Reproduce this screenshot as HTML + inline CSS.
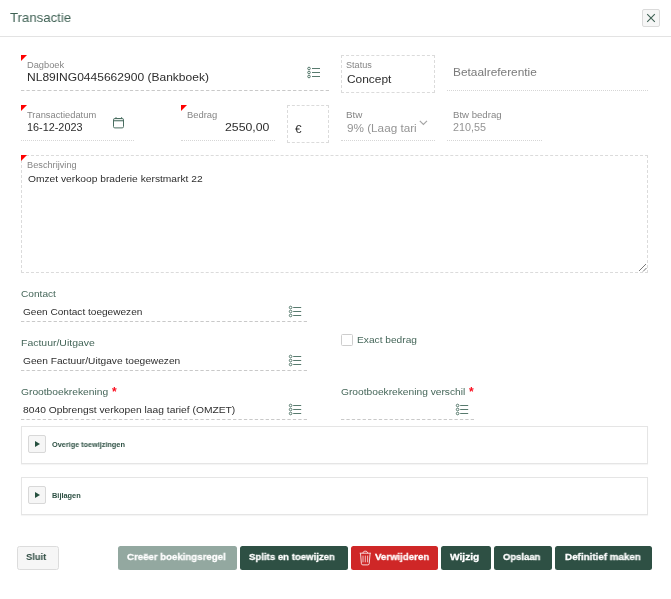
<!DOCTYPE html>
<html>
<head>
<meta charset="utf-8">
<title>Transactie</title>
<style>
html,body{margin:0;padding:0;background:#fff;}
body{width:671px;height:599px;position:relative;overflow:hidden;font-family:"Liberation Sans",sans-serif;color:#222;}
.a{position:absolute;}
.t{position:absolute;white-space:nowrap;line-height:1;transform-origin:0 0;will-change:transform;}
.hr{left:0;top:36px;width:671px;height:1px;background:#e3e3e3;}
.close{left:642px;top:9px;width:18px;height:18px;border:1px solid #dadada;border-radius:2px;background:#f6f6f6;box-sizing:border-box;}
.tri{width:0;height:0;border-top:6px solid #f00;border-right:6px solid transparent;}
.dash{height:1px;background:repeating-linear-gradient(90deg,#cdcdcd 0,#cdcdcd 3px,transparent 3px,transparent 5.4px);}
.dot{height:0;border-top:1px dotted #d6d6d6;}
.box{border:1px dashed #dbdbdb;box-sizing:border-box;}
.panel{border:1px solid #e5e5e5;box-sizing:border-box;background:#fff;box-shadow:0 1px 1px rgba(0,0,0,0.04);}
.tog{width:18px;height:18px;border:1px solid #d8d8d8;border-radius:2px;background:#f6f6f6;box-sizing:border-box;}
.tog:after{content:"";position:absolute;left:6px;top:4.5px;border-left:5px solid #26503f;border-top:3.2px solid transparent;border-bottom:3.2px solid transparent;}
.btn{top:546px;height:24px;border-radius:2.5px;box-sizing:border-box;}
.dk{background:#2e5044;}
</style>
</head>
<body>
<div class="a close"><svg width="16" height="16" viewBox="0 0 16 16" style="position:absolute;left:0;top:0"><path d="M4.2 4.2 L11.8 11.8 M11.8 4.2 L4.2 11.8" stroke="#3f6154" stroke-width="1.1" fill="none"/></svg></div>
<div class="a hr"></div>

<!-- row 1 -->
<div class="a tri" style="left:21px;top:55px"></div>
<svg class="a" style="left:306px;top:66px" width="15" height="13" viewBox="0 0 15 13"><g fill="none" stroke="#4f7366" stroke-width="0.95"><circle cx="3" cy="2.5" r="1.3"/><circle cx="3" cy="6.5" r="1.3"/><circle cx="3" cy="10.5" r="1.3"/><path d="M6 2.5H14M6 6.5H14M6 10.5H14"/></g></svg>
<svg class="a" style="left:21px;top:90px" width="308" height="1" viewBox="0 0 308 1"><path d="M0 0.5H308" stroke="#c9c9c9" stroke-width="1" stroke-dasharray="3.30 2.141" fill="none"/></svg>

<div class="a box" style="left:341px;top:55px;width:94px;height:38px"></div>
<div class="a dot" style="left:447px;top:90px;width:201px"></div>

<!-- row 2 -->
<div class="a tri" style="left:21px;top:105px"></div>
<svg class="a" style="left:112px;top:116px" width="13" height="13" viewBox="0 0 13 13"><g fill="none" stroke="#4a6e61" stroke-width="1"><rect x="1.5" y="2.5" width="10" height="9.4" rx="1.3"/><path d="M1.5 4.6H11.5" stroke-width="1.5" stroke-opacity="0.8"/><path d="M4 1.2V2.5M9.6 1.2V2.5"/></g></svg>
<div class="a dot" style="left:21px;top:140px;width:113px"></div>

<div class="a tri" style="left:181px;top:105px"></div>
<div class="a dot" style="left:181px;top:140px;width:94px"></div>
<div class="a box" style="left:287px;top:105px;width:42px;height:38px"></div>

<svg class="a" style="left:419px;top:120px" width="9" height="6" viewBox="0 0 9 6"><path d="M0.8 0.9L4.4 4.5L8 0.9" stroke="#a4a4a4" stroke-width="1.15" fill="none"/></svg>
<div class="a dot" style="left:341px;top:140px;width:94px"></div>
<div class="a dot" style="left:447px;top:140px;width:95px"></div>

<!-- Beschrijving -->
<div class="a box" style="left:21px;top:155px;width:627px;height:118px"></div>
<div class="a tri" style="left:21px;top:155px"></div>
<svg class="a" style="left:638px;top:263px" width="9" height="9" viewBox="0 0 9 9"><path d="M1 8L8 1M5 8.5L8.5 5" stroke="#6a6a6a" stroke-width="0.9" fill="none"/></svg>

<!-- list icons -->
<svg class="a" style="left:288px;top:305px" width="15" height="13" viewBox="0 0 15 13"><g fill="none" stroke="#4f7366" stroke-width="0.95"><circle cx="2.6" cy="2.5" r="1.3"/><circle cx="2.6" cy="6.5" r="1.3"/><circle cx="2.6" cy="10.5" r="1.3"/><path d="M5.2 2.5H13.2M5.2 6.5H13.2M5.2 10.5H13.2"/></g></svg>
<svg class="a" style="left:21px;top:321px" width="286" height="1" viewBox="0 0 286 1"><path d="M0 0.5H286" stroke="#c9c9c9" stroke-width="1" stroke-dasharray="3.30 2.137" fill="none"/></svg>
<svg class="a" style="left:288px;top:354px" width="15" height="13" viewBox="0 0 15 13"><g fill="none" stroke="#4f7366" stroke-width="0.95"><circle cx="2.6" cy="2.5" r="1.3"/><circle cx="2.6" cy="6.5" r="1.3"/><circle cx="2.6" cy="10.5" r="1.3"/><path d="M5.2 2.5H13.2M5.2 6.5H13.2M5.2 10.5H13.2"/></g></svg>
<svg class="a" style="left:21px;top:370px" width="286" height="1" viewBox="0 0 286 1"><path d="M0 0.5H286" stroke="#c9c9c9" stroke-width="1" stroke-dasharray="3.30 2.137" fill="none"/></svg>
<svg class="a" style="left:288px;top:403px" width="15" height="13" viewBox="0 0 15 13"><g fill="none" stroke="#4f7366" stroke-width="0.95"><circle cx="2.6" cy="2.5" r="1.3"/><circle cx="2.6" cy="6.5" r="1.3"/><circle cx="2.6" cy="10.5" r="1.3"/><path d="M5.2 2.5H13.2M5.2 6.5H13.2M5.2 10.5H13.2"/></g></svg>
<svg class="a" style="left:21px;top:419px" width="286" height="1" viewBox="0 0 286 1"><path d="M0 0.5H286" stroke="#c9c9c9" stroke-width="1" stroke-dasharray="3.30 2.137" fill="none"/></svg>
<svg class="a" style="left:455px;top:403px" width="15" height="13" viewBox="0 0 15 13"><g fill="none" stroke="#4f7366" stroke-width="0.95"><circle cx="2.6" cy="2.5" r="1.3"/><circle cx="2.6" cy="6.5" r="1.3"/><circle cx="2.6" cy="10.5" r="1.3"/><path d="M5.2 2.5H13.2M5.2 6.5H13.2M5.2 10.5H13.2"/></g></svg>
<svg class="a" style="left:341px;top:419px" width="133" height="1" viewBox="0 0 133 1"><path d="M0 0.5H133" stroke="#c9c9c9" stroke-width="1" stroke-dasharray="3.30 2.104" fill="none"/></svg>

<div class="a" style="left:341px;top:334px;width:12px;height:12px;border:1px solid #cdcdcd;border-radius:1.5px;box-sizing:border-box;background:#fff"></div>

<div class="t" style="left:112px;top:386px;font-size:12px;color:#fb0d1e;font-weight:bold">*</div>
<div class="t" style="left:469px;top:386px;font-size:12px;color:#fb0d1e;font-weight:bold">*</div>

<!-- panels -->
<div class="a panel" style="left:21px;top:426px;width:627px;height:38px"></div>
<div class="a tog" style="left:28px;top:435px"></div>
<div class="a panel" style="left:21px;top:477px;width:627px;height:38px"></div>
<div class="a tog" style="left:28px;top:486px"></div>

<!-- buttons -->
<div class="a btn" style="left:17px;width:42px;background:#f6f6f6;border:1px solid #dcdcdc"></div>
<div class="a btn" style="left:118px;width:119px;background:#93a8a0"></div>
<div class="a btn dk" style="left:240px;width:108px"></div>
<div class="a btn" style="left:351px;width:87px;background:#cf2727"></div>
<svg class="a" style="left:359px;top:550px" width="13" height="16" viewBox="0 0 13 16"><g fill="none" stroke="#fff" stroke-width="0.9" stroke-opacity="0.92"><path d="M0.7 3.2H11.9"/><path d="M4 3.2C4 1.7 5 1.2 6.3 1.2C7.6 1.2 8.6 1.7 8.6 3.2"/><path d="M1.5 3.4L2.4 13.6Q2.5 14.9 3.8 14.9H8.8Q10.1 14.9 10.2 13.6L11.1 3.4"/><path d="M4 5.6V12.3M6.3 5.6V12.3M8.6 5.6V12.3" stroke-opacity="0.8"/></g></svg>
<div class="a btn dk" style="left:441px;width:50px"></div>
<div class="a btn dk" style="left:494px;width:58px"></div>
<div class="a btn dk" style="left:555px;width:97px"></div>

<!-- text -->
<div class="t" style="left:10.00px;top:11.00px;font-size:13.6px;color:#3f6154;transform:scaleX(0.9702);">Transactie</div>
<div class="t" style="left:27.00px;top:61.00px;font-size:8.5px;color:#858585;transform:scaleX(1.0915);">Dagboek</div>
<div class="t" style="left:27.00px;top:73.00px;font-size:10.1px;color:#2e2e2e;transform:scaleX(1.1921);">NL89ING0445662900 (Bankboek)</div>
<div class="t" style="left:346.00px;top:61.00px;font-size:8.5px;color:#858585;transform:scaleX(1.0699);">Status</div>
<div class="t" style="left:347.00px;top:75.00px;font-size:10.1px;color:#2e2e2e;transform:scaleX(1.1803);">Concept</div>
<div class="t" style="left:453.00px;top:68.00px;font-size:10.3px;color:#7a7a7a;transform:scaleX(1.1536);">Betaalreferentie</div>
<div class="t" style="left:27.00px;top:111.00px;font-size:8.5px;color:#858585;transform:scaleX(1.0981);">Transactiedatum</div>
<div class="t" style="left:27.00px;top:123.00px;font-size:10.1px;color:#2e2e2e;transform:scaleX(1.0746);">16-12-2023</div>
<div class="t" style="left:187.00px;top:111.00px;font-size:8.5px;color:#858585;transform:scaleX(1.1060);">Bedrag</div>
<div class="t" style="left:225.00px;top:123.00px;font-size:10.1px;color:#2e2e2e;transform:scaleX(1.2180);">2550,00</div>
<div class="t" style="left:295.00px;top:125.00px;font-size:10.1px;color:#2e2e2e;transform:scaleX(1.1674);">€</div>
<div class="t" style="left:346.00px;top:111.00px;font-size:8.5px;color:#858585;transform:scaleX(1.1594);">Btw</div>
<div class="t" style="left:347.00px;top:124.00px;font-size:10.1px;color:#949494;transform:scaleX(1.1610);">9% (Laag tari</div>
<div class="t" style="left:453.00px;top:111.00px;font-size:8.5px;color:#858585;transform:scaleX(1.1298);">Btw bedrag</div>
<div class="t" style="left:453.00px;top:123.00px;font-size:10.1px;color:#949494;transform:scaleX(1.0686);">210,55</div>
<div class="t" style="left:27.00px;top:161.00px;font-size:8.5px;color:#858585;transform:scaleX(1.0839);">Beschrijving</div>
<div class="t" style="left:28.00px;top:174.00px;font-size:9.5px;color:#2e2e2e;transform:scaleX(1.0776);">Omzet verkoop braderie kerstmarkt 22</div>
<div class="t" style="left:21.00px;top:289.00px;font-size:9.6px;color:#46675a;transform:scaleX(1.0555);">Contact</div>
<div class="t" style="left:23.00px;top:307.00px;font-size:9.4px;color:#2e2e2e;transform:scaleX(1.0750);">Geen Contact toegewezen</div>
<div class="t" style="left:21.00px;top:338.00px;font-size:9.6px;color:#46675a;transform:scaleX(1.0903);">Factuur/Uitgave</div>
<div class="t" style="left:23.00px;top:356.00px;font-size:9.4px;color:#2e2e2e;transform:scaleX(1.0856);">Geen Factuur/Uitgave toegewezen</div>
<div class="t" style="left:357.00px;top:335.00px;font-size:9.6px;color:#46675a;transform:scaleX(1.0608);">Exact bedrag</div>
<div class="t" style="left:21.00px;top:387.00px;font-size:9.6px;color:#46675a;transform:scaleX(1.0674);">Grootboekrekening</div>
<div class="t" style="left:23.00px;top:405.00px;font-size:9.4px;color:#2e2e2e;transform:scaleX(1.0950);">8040 Opbrengst verkopen laag tarief (OMZET)</div>
<div class="t" style="left:341.00px;top:387.00px;font-size:9.6px;color:#46675a;transform:scaleX(1.0642);">Grootboekrekening verschil</div>
<div class="t" style="left:52.00px;top:441.00px;font-size:7.4px;color:#2d5043;font-weight:bold;transform:scaleX(0.9856);">Overige toewijzingen</div>
<div class="t" style="left:52.00px;top:492.00px;font-size:7.4px;color:#2d5043;font-weight:bold;transform:scaleX(0.9931);">Bijlagen</div>
<div class="t" style="left:26.00px;top:552.00px;font-size:9.9px;color:#2d4a40;font-weight:bold;transform:scaleX(0.9543);">Sluit</div>
<div class="t" style="left:127.00px;top:552.00px;font-size:9.9px;color:#fff;font-weight:bold;-webkit-text-stroke:0.3px #fff;transform:scaleX(0.9769);">Creëer boekingsregel</div>
<div class="t" style="left:249.00px;top:552.00px;font-size:9.9px;color:#fff;font-weight:bold;-webkit-text-stroke:0.3px #fff;transform:scaleX(0.9719);">Splits en toewijzen</div>
<div class="t" style="left:375.00px;top:552.00px;font-size:9.9px;color:#fff;font-weight:bold;-webkit-text-stroke:0.3px #fff;transform:scaleX(0.9770);">Verwijderen</div>
<div class="t" style="left:450.00px;top:552.00px;font-size:9.9px;color:#fff;font-weight:bold;-webkit-text-stroke:0.3px #fff;transform:scaleX(1.0319);">Wijzig</div>
<div class="t" style="left:503.00px;top:552.00px;font-size:9.9px;color:#fff;font-weight:bold;-webkit-text-stroke:0.3px #fff;transform:scaleX(0.9557);">Opslaan</div>
<div class="t" style="left:565.00px;top:552.00px;font-size:9.9px;color:#fff;font-weight:bold;-webkit-text-stroke:0.3px #fff;transform:scaleX(0.9931);">Definitief maken</div>
</body>
</html>
